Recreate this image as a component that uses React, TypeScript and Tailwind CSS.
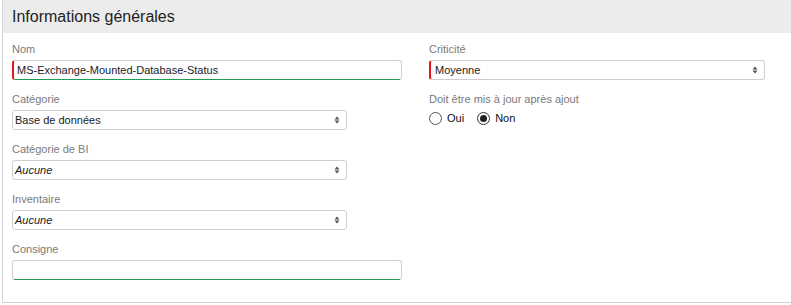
import React from 'react';

const Arrows: React.FC = () => (
  <svg width="6" height="8" viewBox="0 0 6 8" className="shrink-0">
    <path d="M3 0.5 L5.5 3.4 L0.5 3.4 Z" fill="#555" />
    <path d="M3 7.5 L5.5 4.6 L0.5 4.6 Z" fill="#555" />
  </svg>
);

const Label: React.FC<{ children: React.ReactNode }> = ({ children }) => (
  <div className="text-[11px] leading-[13px] text-[#7a7a7a] mb-[4px]">{children}</div>
);

// text fields: grey frame, green bottom edge (valid state)
const TextInput: React.FC<{ value?: string; required?: boolean; width: string }> = ({ value, required, width }) => (
  <div
    className={
      required
        ? `${width} h-[20px] flex flex-col overflow-hidden rounded-[3px] border-t border-r border-l-2 border-[#cfcfcf] border-l-[#e8141c] bg-white text-[11px] text-[#1a1a2a]`
        : `${width} h-[20px] flex flex-col overflow-hidden rounded-[3px] border-t border-x border-[#cfcfcf] bg-white text-[11px] text-[#1a1a2a]`
    }
  >
    <div className={`flex-1 flex items-center ${required ? 'pl-[3px]' : 'pl-[4px]'}`}>{value}</div>
    <div className="h-px bg-[#1f9d55]" />
  </div>
);

const Select: React.FC<{ value: string; italic?: boolean; required?: boolean; width: string }> = ({ value, italic, required, width }) => (
  <div
    className={
      required
        ? `${width} h-[20px] flex items-center justify-between rounded-[3px] border-y border-r border-l-2 border-[#cfcfcf] border-l-[#e8141c] bg-white pl-[4px] pr-[6px] text-[11px] text-[#1a1a1a]`
        : `${width} h-[20px] flex items-center justify-between rounded-[3px] border border-[#cfcfcf] bg-white pl-[2px] pr-[6px] text-[11px] text-[#1a1a1a]`
    }
  >
    <span className={italic ? 'italic' : ''}>{value}</span>
    <Arrows />
  </div>
);

const Radio: React.FC<{ checked?: boolean; label: string }> = ({ checked, label }) => (
  <div className="flex items-center gap-[5px]">
    <span
      className={`w-[13px] h-[13px] rounded-full border flex items-center justify-center bg-white ${checked ? 'border-[#333]' : 'border-[#555]'}`}
    >
      {checked && <span className="w-[7px] h-[7px] rounded-full bg-[#222]" />}
    </span>
    <span className="text-[11px] text-[#111]">{label}</span>
  </div>
);

export default function App() {
  return (
    <div className="w-[791px] h-[305px] bg-white" style={{ fontFamily: '"Liberation Sans", Arial, sans-serif' }}>
      <div className="ml-[2px] h-[303px] border-l border-b border-[#d2d2d2]">
        {/* ── Header ── */}
        <div className="h-[33px] bg-[#ececec] pl-[9px] flex items-center">
          <h2 className="text-[16px] text-[#222]">Informations générales</h2>
        </div>

        {/* ── Form ── */}
        <div className="flex gap-[27px] pl-[9px] pt-[10px]">
          <div className="w-[390px] flex flex-col gap-[13px]">
            <div>
              <Label>Nom</Label>
              <TextInput value="MS-Exchange-Mounted-Database-Status" required width="w-[390px]" />
            </div>
            <div>
              <Label>Catégorie</Label>
              <Select value="Base de données" width="w-[335px]" />
            </div>
            <div>
              <Label>Catégorie de BI</Label>
              <Select value="Aucune" italic width="w-[335px]" />
            </div>
            <div>
              <Label>Inventaire</Label>
              <Select value="Aucune" italic width="w-[335px]" />
            </div>
            <div>
              <Label>Consigne</Label>
              <TextInput width="w-[390px]" />
            </div>
          </div>

          <div className="w-[336px] flex flex-col gap-[13px]">
            <div>
              <Label>Criticité</Label>
              <Select value="Moyenne" required width="w-[336px]" />
            </div>
            <div>
              <Label>Doit être mis à jour après ajout</Label>
              <div className="flex items-center gap-[13px]">
                <Radio label="Oui" />
                <Radio label="Non" checked />
              </div>
            </div>
          </div>
        </div>
      </div>
    </div>
  );
}
